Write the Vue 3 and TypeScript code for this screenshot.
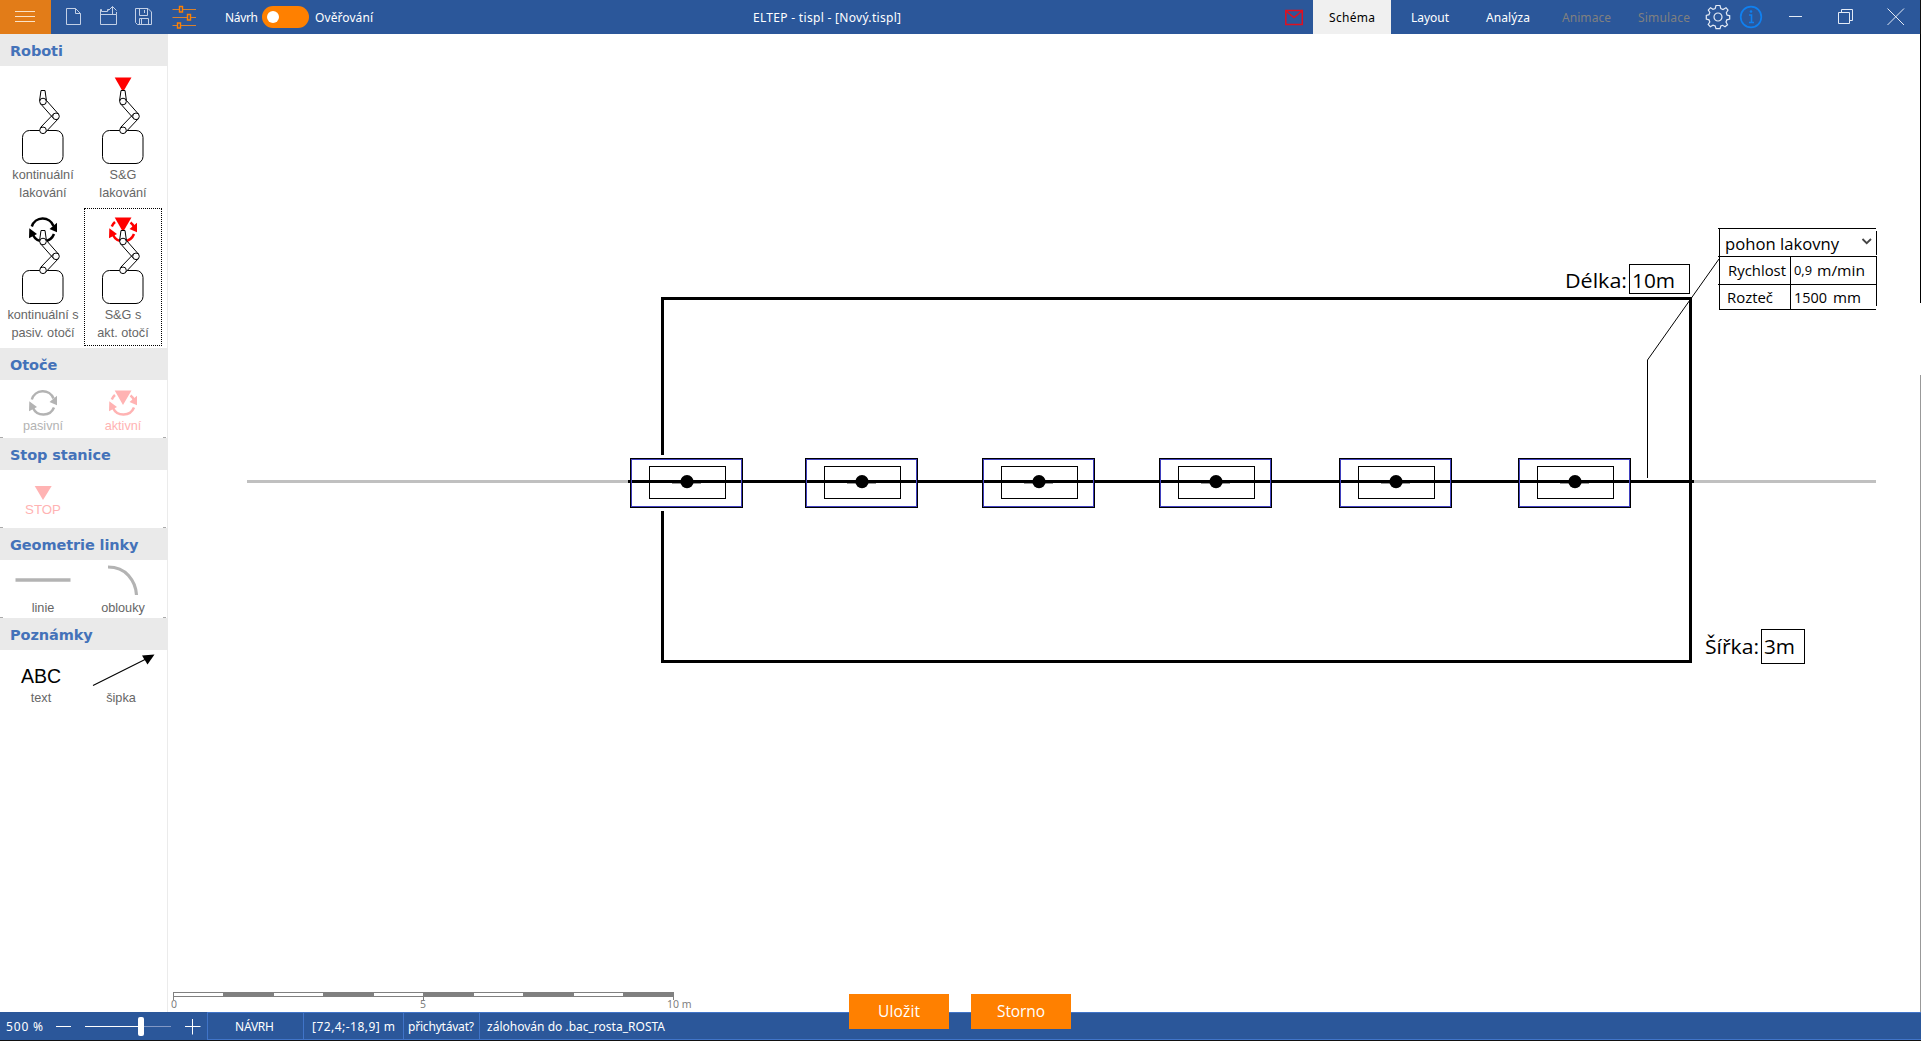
<script setup lang="ts">
interface Tab { name: string; width: number; text: number; state: string }
interface Label { text: string; x: number; y: number; w: number; size: number }
interface Robot { lines: string[]; stop: boolean; spin: boolean; picked: boolean }

const robots: Robot[] = [
  { lines: ['kontinuální', 'lakování'], stop: false, spin: false, picked: false },
  { lines: ['S&G', 'lakování'], stop: true, spin: false, picked: false },
  { lines: ['kontinuální s', 'pasiv. otočí'], stop: false, spin: true, picked: false },
  { lines: ['S&G s', 'akt. otočí'], stop: true, spin: true, picked: true },
]
const tabs: Tab[] = [
  { name: 'Schéma', width: 78, text: 46, state: 'active' },
  { name: 'Layout', width: 77, text: 38, state: '' },
  { name: 'Analýza', width: 80, text: 44, state: '' },
  { name: 'Animace', width: 76, text: 49, state: 'off' },
  { name: 'Simulace', width: 80, text: 52, state: 'off' },
]
const cells = [
  { text: 'NÁVRH', width: 96, pad: 28, len: 39 },
  { text: '[72,4;-18,9] m', width: 100, pad: 9, len: 83 },
  { text: 'přichytávat?', width: 76, pad: 5, len: 66 },
  { text: 'zálohován do .bac_rosta_ROSTA', width: 1442, pad: 8, len: 178 },
]
const carriers: number[] = [630, 805, 982, 1159, 1339, 1518]
const labels: Label[] = [
  { text: 'Délka:', x: 1565, y: 288, w: 62, size: 20 },
  { text: '10m', x: 1632, y: 288, w: 43, size: 20 },
  { text: 'Šířka:', x: 1705, y: 653.5, w: 54, size: 20 },
  { text: '3m', x: 1764, y: 653.5, w: 31, size: 20 },
  { text: 'pohon lakovny', x: 1725, y: 250, w: 114, size: 17 },
  { text: 'Rychlost', x: 1728, y: 276, w: 58, size: 15 },
  { text: '0,9', x: 1794, y: 275, w: 18, size: 12.5 },
  { text: 'm/min', x: 1817, y: 275.5, w: 48, size: 15 },
  { text: 'Rozteč', x: 1727, y: 303, w: 46, size: 15 },
  { text: '1500', x: 1794, y: 303, w: 33, size: 14.5 },
  { text: 'mm', x: 1833, y: 303, w: 28, size: 15 },
]
const whiteSegments: number[] = [0, 2, 4, 6, 8]
</script>

<template>
  <div class="app">
    <header class="top">
      <div class="menu">
        <svg width="51" height="34"><path d="M15 11.5H35M15 16.5H35M15 21.5H35" stroke="#fbe3c8" /></svg>
      </div>
      <svg class="tools" width="162" height="34" viewBox="51 0 162 34" fill="none" stroke="#c3d0e6">
        <path d="M66.5 8.5H75.5L80.5 13.5V24.5H66.5ZM75.5 8.5V13.5H80.5" />
        <path d="M109 9.5H107.5V11.5H101.5V9.5H100.5V24.5H116.5V14.5H100.5M112.5 15V6.5M108.5 10.5L112.5 6.5L116.5 10.5M116.5 12V14.5" />
        <path d="M135.5 8.5H148L151.5 12V24.5H137.5L135.5 22.5ZM139.5 8.5V15.5H147.5V8.5M144.5 10V13M139.5 24.5V18.5H148.5V24.5M141.5 19V24" />
        <path d="M172.5 9.5H179M183 9.5H196M172.5 17.5H187M191 17.5H196M172.5 25.5H177M181 25.5H196" stroke="#d8812d" />
        <path d="M179.500 6.500H182.500V12H179.500ZM187.500 14.500H190.500V20H187.500ZM177.500 23H180.500V28H177.500Z" stroke="#ff8000" stroke-width="1.4" />
      </svg>
      <div class="mode">
        <svg width="37" height="34"><text x="0" y="22" textLength="33">Návrh</text></svg>
        <span class="toggle"><i></i></span>
        <svg class="check" width="60" height="34"><text x="0" y="22" textLength="58">Ověřování</text></svg>
      </div>
      <div class="title"><svg width="150" height="34"><text x="0" y="22" textLength="148">ELTEP - tispl - [Nový.tispl]</text></svg></div>
      <svg class="mail" width="28" height="34" viewBox="1285 0 28 34" fill="none" stroke="#e01020" stroke-width="1.5">
        <path d="M1285.8 10.5H1302.3V24.5H1285.8ZM1286 11L1294 17.5L1302 11" />
      </svg>
      <nav class="tabs">
        <div v-for="t in tabs" :key="t.name" class="tab" :class="t.state" :style="{ width: t.width + 'px' }">
          <svg :width="t.text" height="34"><text x="0" y="22" :textLength="t.text">{{ t.name }}</text></svg>
        </div>
      </nav>
      <svg class="window" width="217" height="34" viewBox="1704 0 217 34" fill="none" stroke="#e4ebf6">
        <g transform="translate(1718 17)" stroke-width="1.2">
          <path d="M-2-11.5H2L2.8-8.5L5-7.5L8-9.3L10-7L8.3-4.2L9-2L11.7-1.2V2L8.8 2.8L8 5L9.5 7.8L7 9.8L4.5 8.3L2.8 9L2 11.7H-2L-2.8 9L-5 8.2L-7.7 9.700L-9.8 7.5L-8.2 5L-9 2.8L-11.7 2V-1.5L-9-2.3L-8.2-4.5L-9.7-7L-7.5-9.3L-5-7.7L-2.8-8.5Z" />
          <circle r="4" />
        </g>
        <circle cx="1751" cy="17" r="10.3" stroke="#1080f0" stroke-width="1.7" />
        <path d="M1749 15H1751.500V22M1749 22.500H1754" stroke="#1080f0" stroke-width="1.6" />
        <circle cx="1751" cy="11.5" r="1.3" fill="#1080f0" stroke="none" />
        <path d="M1789 16.5H1802M1838.5 12.5H1849.5V23.5H1838.5ZM1841.5 12V9.5H1852.5V20.5H1850M1887.5 8.5L1904 25M1904 8.5L1887.5 25" />
        <path d="M1920.5 0V34" stroke="#111" />
      </svg>
    </header>

    <div class="work">
      <aside class="side">
        <h2>Roboti</h2>
        <section class="tall">
          <div v-for="r in robots" :key="r.lines.join()" class="item robot" :class="{ picked: r.picked }">
            <svg width="80" height="99" viewBox="3 66 80 99">
              <g v-if="r.spin" :fill="r.stop ? '#f00' : '#000'" :stroke="r.stop ? '#f00' : '#000'">
                <path :d="r.stop ? 'M31.8 86.5A11.5 11.5 0 0 1 35 82M50.5 82.5A11.5 11.5 0 0 1 54 87' : 'M31.8 86.5A11.5 11.5 0 0 1 53.5 86'" fill="none" stroke-width="2.5" />
                <path d="M33 95A11.5 11.5 0 0 0 54 94" fill="none" stroke-width="2.5" />
                <path d="M57 82.7V92.3L49.5 89ZM29.3 88.3L29 98.3L37 94Z" stroke="none" />
              </g>
              <path v-if="r.stop" d="M34.7 77.500H51.500L43 92Z" fill="#f00" />
              <g fill="#fff" stroke="#000">
                <rect x="22.500" y="130.500" width="40.500" height="33" rx="7" />
                <path d="M41 90.500H45L46.500 101H39.500Z" />
                <path d="M40.600 103.800L53.600 118.500L58.400 114L45.400 99.300ZM53.500 114L40.500 127.500L45.500 132.300L58.500 118.500Z" />
                <circle cx="43" cy="101.500" r="3.300" /><circle cx="56" cy="116.300" r="3.300" /><circle cx="43" cy="130.300" r="3.300" />
              </g>
            </svg>
            <p v-for="l in r.lines" :key="l">{{ l }}</p>
          </div>
        </section>
        <h2>Otoče</h2>
        <section class="short">
          <div class="item off">
            <svg width="80" height="36" viewBox="3 380 80 36" fill="#b3b3b3" stroke="#b3b3b3">
              <path d="M31.8 399.5A11.5 11.5 0 0 1 53.5 398.5M33 408A11.5 11.5 0 0 0 54 407.5" fill="none" stroke-width="2.5" />
              <path d="M57 395.7V405.3L49.5 402ZM29.3 401.3L29 411.3L37 407Z" stroke="none" />
            </svg>
            <p>pasivní</p>
          </div>
          <div class="item pink">
            <svg width="80" height="36" viewBox="3 380 80 36" fill="#ffb3b3" stroke="#ffb3b3">
              <path d="M31.8 399.5A11.5 11.5 0 0 1 35 395M50.5 395.5A11.5 11.5 0 0 1 54 400M33 408A11.5 11.5 0 0 0 54 407.5" fill="none" stroke-width="2.5" />
              <path d="M57 395.7V405.3L49.5 402ZM29.3 401.3L29 411.3L37 407ZM34.7 390.5H51.5L43 405Z" stroke="none" />
            </svg>
            <p>aktivní</p>
          </div>
        </section>
        <h2>Stop stanice</h2>
        <section class="short">
          <div class="item pink stop">
            <svg width="80" height="30" viewBox="3 470 80 30"><path d="M34.7 486H51.7L43 500Z" fill="#ffb3b3" /></svg>
            <p>STOP</p>
          </div>
        </section>
        <h2>Geometrie linky</h2>
        <section class="short">
          <div class="item">
            <svg width="80" height="38" viewBox="3 560 80 38"><path d="M15.5 580H70.5" stroke="#b3b3b3" stroke-width="3.4" /></svg>
            <p>linie</p>
          </div>
          <div class="item">
            <svg width="80" height="38" viewBox="83 560 80 38"><path d="M108 567Q121 567 128.5 575.5T136.5 595" fill="none" stroke="#b3b3b3" stroke-width="3.2" /></svg>
            <p>oblouky</p>
          </div>
        </section>
        <h2>Poznámky</h2>
        <section class="notes">
          <div class="item">
            <svg width="80" height="38" viewBox="1 650 80 38"><text x="21" y="682.5" textLength="40" font-size="19.5">ABC</text></svg>
            <p>text</p>
          </div>
          <div class="item">
            <svg width="80" height="38" viewBox="81 650 80 38"><path d="M93 685.500L147 658.500" stroke="#000" stroke-width="1.2" /><path d="M154.500 654.500L142 655.500L147.500 664.500Z" /></svg>
            <p>šipka</p>
          </div>
        </section>
      </aside>

      <main class="canvas">
        <svg width="1753" height="978" viewBox="168 34 1753 978">
          <path d="M247 481.5H1876" stroke="#c0c0c0" stroke-width="3" />
          <path d="M662.5 455V298.5H1690.5V661.5H662.5V511" fill="none" stroke="#000" stroke-width="3" />
          <g v-for="x in carriers" :key="x" fill="none">
            <rect :x="x" y="458" width="113" height="50" fill="#fff" />
            <path :d="`M${x + 42} 483.5h29`" stroke="#999" />
          </g>
          <path d="M628 481.5H1694" stroke="#000" stroke-width="3" />
          <g v-for="x in carriers" :key="'c' + x" fill="none">
            <rect :x="x + 0.5" y="458.5" width="112" height="49" stroke="#000" />
            <rect :x="x + 1.5" y="459.5" width="110" height="47" stroke="#3f3fbf" />
            <rect :x="x + 19.5" y="466.5" width="76" height="32" stroke="#000" />
            <circle :cx="x + 57" cy="481.7" r="6.6" fill="#000" />
          </g>
          <path d="M1647.5 478V360L1719 259" fill="none" stroke="#000" />
          <g fill="none" stroke="#000">
            <rect x="1629.5" y="264.5" width="60" height="29" />
            <rect x="1761.5" y="629.5" width="43" height="34" />
            <path d="M1718 228.5H1876M1719.5 228V309M1718 256.5H1876M1718 284.5H1876M1719 309.5H1876M1790.5 257V309M1876.5 231V255M1876.5 256V306" />
            <path d="M1862.5 239L1866.7 243.2L1871 239" stroke="#444" stroke-width="1.8" />
            <path d="M1920.5 34V303" />
            <path d="M1920.5 375V1012" stroke="#999" />
          </g>
          <text v-for="l in labels" :key="l.text" class="calibri" :x="l.x" :y="l.y" :font-size="l.size" :textLength="l.w" lengthAdjust="spacingAndGlyphs">{{ l.text }}</text>
          <g fill="#808080">
            <rect x="173" y="992" width="501" height="5" />
            <path d="M173 996h1v4h-1zM423 996h1v4h-1zM673 996h1v4h-1z" />
            <rect v-for="n in whiteSegments" :key="n" :x="174 + n * 50" y="993" width="49" height="3" fill="#fff" />
            <g class="ruler">
              <text x="171" y="1008">0</text><text x="420" y="1008">5</text><text x="667" y="1008">10 m</text>
            </g>
          </g>
        </svg>
      </main>
    </div>

    <footer class="status">
      <svg class="zoom" width="207" height="28" viewBox="0 1012 207 28">
        <text x="6" y="1031" textLength="37">500 %</text>
        <g stroke="#fff"><path d="M56 1026.5H71M85 1026.5H140M185 1026.5H200.5M192.5 1019V1034.5" /><path d="M144 1026.5H171" stroke="#8298c5" /></g>
        <rect x="138" y="1017" width="6" height="19" rx="2" fill="#fff" />
      </svg>
      <div v-for="c in cells" :key="c.text" class="cell" :style="{ width: c.width + 'px', paddingLeft: c.pad - 1 + 'px' }">
        <svg :width="c.len" height="27"><text x="0" y="18" :textLength="c.len">{{ c.text }}</text></svg>
      </div>
    </footer>

    <div class="actions">
      <button><svg width="42" height="35"><text x="0" y="23" textLength="42">Uložit</text></svg></button>
      <button><svg width="48" height="35"><text x="0" y="23" textLength="48">Storno</text></svg></button>
    </div>
  </div>
</template>

<style>
body { margin: 0; background: #fff; overflow: hidden; }
</style>
<style scoped>
.app { position: relative; width: 1921px; height: 1041px; background: #fff; overflow: hidden; font: 12px "DejaVu Sans Condensed", "Open Sans", sans-serif; }
svg { display: block; flex: none; overflow: visible; }
.top { display: flex; height: 34px; background: #2b579a; color: #fff; }
.top text, .status text { fill: #fff; font: 12px "Noto Sans", sans-serif; }
.menu { width: 51px; background: #e27c18; }
.mode { display: flex; align-items: center; padding-left: 12px; width: 528px; box-sizing: border-box; }
.toggle { display: flex; align-items: center; width: 47px; height: 22px; border-radius: 11px; background: #ff8000; }
.toggle i { width: 12px; height: 12px; margin-left: 5px; border-radius: 50%; background: #fff; }
.check { margin-left: 6px; }
.title { box-sizing: border-box; width: 544px; padding-left: 12px; }
.tabs { display: flex; }
.tab { display: flex; justify-content: center; }
.active { background: #f0f0f0; }
.tab.active text { fill: #000; }
.tab.off text { fill: #808080; }
.work { display: flex; height: 978px; }
.side { width: 168px; box-sizing: border-box; border-right: 1px solid #ebebeb; }
h2 { margin: 0 -1px 0 0; padding-left: 10px; height: 32px; background: #eaeaea; color: #4472b9; font: bold 14.5px/34px "DejaVu Sans", sans-serif; letter-spacing: -0.1px; white-space: nowrap; }
section { display: grid; grid-template-columns: 80px 80px; padding-left: 3px; box-sizing: border-box; }
.tall { height: 282px; grid-template-rows: 140px 140px; }
.short { height: 58px; background: linear-gradient(#aaa, #aaa) 0 100% / 3px 1px no-repeat, linear-gradient(#aaa, #aaa) 163px 100% / 3px 1px no-repeat; }
.item { box-sizing: border-box; }
.item p { margin: 0; color: #666; text-align: center; font: 12.7px/18.5px "Liberation Sans", Arial, sans-serif; white-space: nowrap; }
.item svg + p { margin-top: 0.6px; }
.item text { font-family: "Liberation Sans", Arial, sans-serif; }
.robot { position: relative; }
.picked::after { content: ""; position: absolute; left: 1px; top: 2px; width: 76px; height: 136px; border: 1px dotted #000; }
.off p { color: #b3b3b3; }
.pink p { color: #ffb3b3; }
.item.stop p { font-size: 13.3px; }
.notes .item { margin-left: -2px; margin-right: 2px; }
.canvas { flex: 1; }
.calibri { font-family: "Open Sans", "Noto Sans", sans-serif; }
.ruler text { font: 10.5px "Noto Sans", sans-serif; }
.status { display: flex; height: 28px; background: #2b579a; border-bottom: 1px solid #111; }
.cell { box-sizing: border-box; height: 28px; border: 1px solid #4074c8; border-right-width: 0; }
.actions { position: absolute; left: 849px; top: 994px; display: flex; gap: 22px; }
button { display: flex; justify-content: center; width: 100px; height: 35px; padding: 0; border: 0; background: #ff8000; }
button text { fill: #fff; font: 15.5px "Open Sans", sans-serif; }
</style>
